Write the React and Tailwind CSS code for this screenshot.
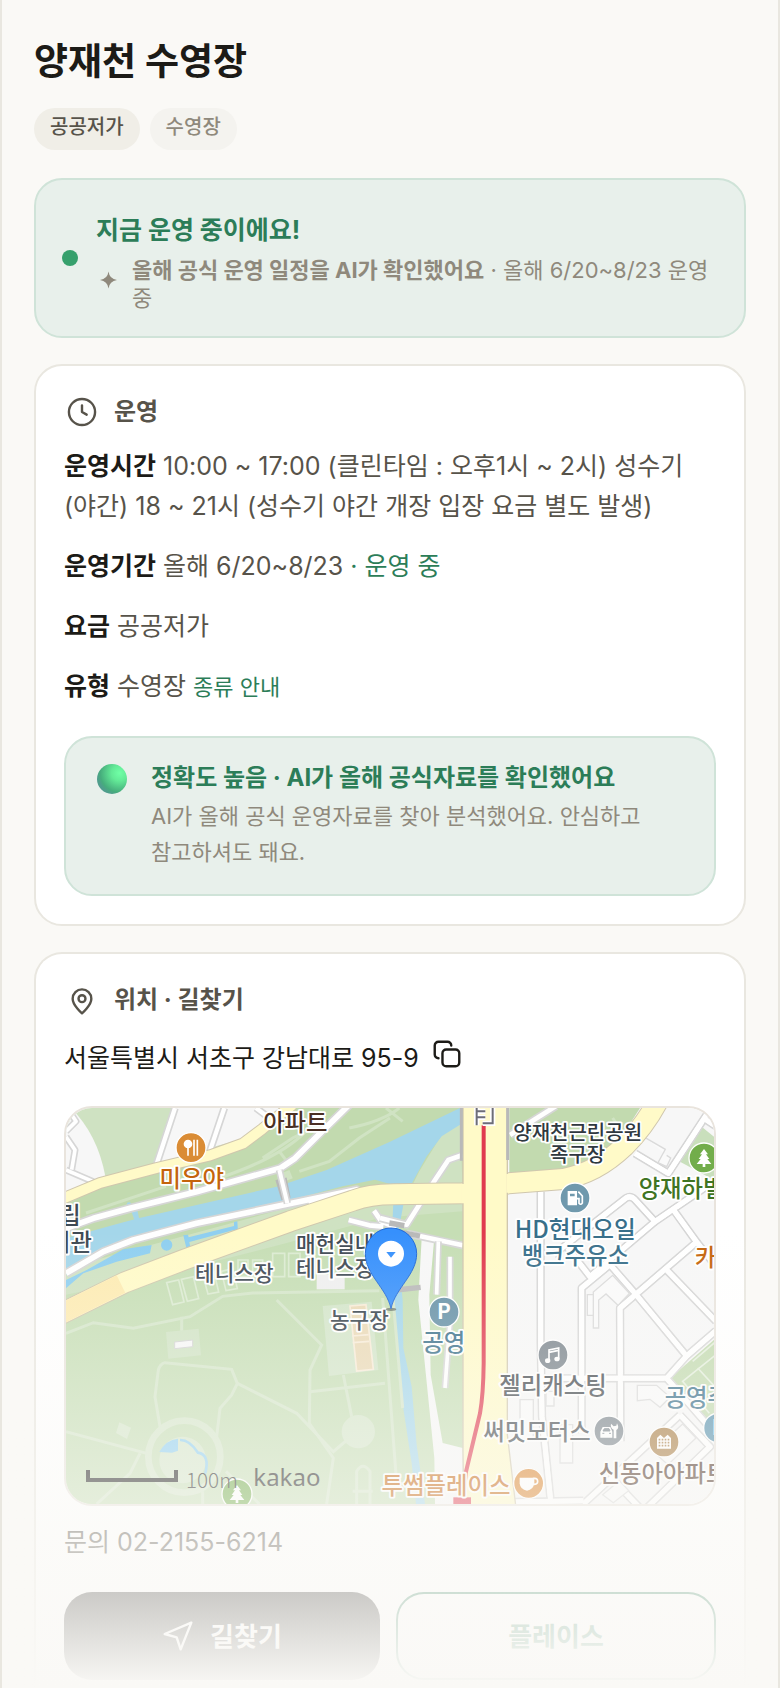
const KR = "font-['Inter','Noto_Sans_CJK_KR',sans-serif]";

function Icon({ children, className = 'size-8' }) {
  return (
    <svg viewBox="0 0 24 24" fill="none" stroke="currentColor" strokeWidth="1.8" strokeLinecap="round" strokeLinejoin="round" className={className} aria-hidden="true">
      {children}
    </svg>
  );
}

function Road({ d, w = 15, casing = '#d6d6d6', fill = '#ffffff', edge = 5 }) {
  return (
    <g fill="none" strokeLinejoin="round">
      <path d={d} stroke={casing} strokeWidth={w + edge * 2} />
      <path d={d} stroke={fill} strokeWidth={w} />
    </g>
  );
}

function Label({ x, y, size = 70, color, anchor = 'middle', children }) {
  return (
    <text x={x} y={y} fontSize={size} fill={color} textAnchor={anchor} fontWeight="500" stroke="#ffffff" strokeWidth="11" strokeLinejoin="round" paintOrder="stroke">
      {children}
    </text>
  );
}

function Poi({ x, y, color, children }) {
  return (
    <g transform={`translate(${x} ${y})`}>
      <circle r="45" fill={color} stroke="#ffffff" strokeWidth="4" />
      {children}
    </g>
  );
}

const TREE = 'M0-27l-12 16h6l-10 14h6l-12 15h18v9h8v-9h18l-12-15h6l-10-14h6z';

const CITY_ROADS = [
  'M1424 251V700L1428 926L1455 1188',
  'M1547 976V540L1632 470L1707 556',
  'M1707 136L1807 196L1922 20',
  'M1912 30L1950 55',
  'M1462 440L1680 270Q1694 262 1706 274L1767 341L1950 216',
  'M1505 420L1572 506L1767 341',
  'M1822 305L1892 402L1662 600L1664 1000',
  'M1892 402L1950 475',
  'M1802 486L1950 640',
  'M1707 556L1862 744L1802 811H1427',
  'M1862 744L1950 668',
  'M1802 811L1950 980',
  'M1842 921L1552 1188',
  'M1632 1106L1722 1200',
  'M1842 921L1932 1016L1742 1200',
  'M1347 1182L1552 1178',
];

const CITY_BLOCKS = [
  'M1362 875h40v120h-40z',
  'M1482 950h38v115h-38z',
  'M1564 560h26v62h-26z',
  'M1714 832h58l40 36-30 30-30-24-38 4z',
  'M1736 88l62 36-22 40 26 12 12-26-12-8',
  'M1582 660v-108l58-50 50 54-34 36-36-34-22 18v84z',
  'M1760 1030l90-82 40 42-84 80z',
  'M1610 1160l50-42 28 30-46 36z',
  'M1440 850h24v44h-24z',
];

const PARK_PATHS = [
  'M0 676L82 644L202 661L372 626L470 565L560 555L940 548',
  'M632 576L767 711L732 786L730 946L802 1050L782 1188',
  'M282 956L267 866L277 786Q282 768 297 764L497 784L514 826L497 861L462 901L452 986',
  'M514 826L692 916L802 1031L850 990',
  'M0 971L242 1036M222 1036L192 1096L92 1188',
  'M732 851L957 826M832 801L857 926',
  'M872 1188V1090Q890 1060 912 1090V1188M860 1150h60',
  'M347 626v60M480 1090L580 1188M410 1150v38',
  'M950 570L990 1100M980 560L1010 900',
];

function MapDrawing() {
  return (
    <svg viewBox="0 0 1944 1188" preserveAspectRatio="xMidYMid slice" role="img" aria-label="양재천 수영장 주변 지도" className="block size-full font-['Noto_Sans_CJK_KR',sans-serif]">
      <rect width="1944" height="1188" fill="#f7f7f7" />

      <path d="M0 0H1192V1188H0z" fill="#cfe2c2" />
      <path d="M0 0H15Q95 80 118 205L0 260z" fill="#f7f7f7" />
      <path d="M330 0H650L600 45L520 95L430 120L272 168z" fill="#f7f7f7" />
      <path d="M0 290L110 232L300 182L500 122L620 50L690 0H1190V260L980 250L820 290L0 480z" fill="#c2daaf" />
      <path d="M1182 20L1127 80L1060 190L1030 250L1190 250z" fill="#cfe2c2" />
      <path d="M0 480L700 290L940 230L980 240L960 300L600 420L0 640z" fill="#cfe2c2" />
      <path d="M0 560Q400 480 940 330L1190 310V1188H0z" fill="#c6deb5" />
      <path d="M1330 0H1722L1642 126L1492 186L1330 196z" fill="#c2daaf" />
      <path d="M1907 56L1944 86V216L1842 161z" fill="#c9dfbc" />
      <path d="M1950 690L1812 811L1912 936L1950 916z" fill="#c2daaf" />
      <path d="M1950 740L1850 820L1930 916M1895 780L1950 840M1880 760L1950 700" fill="none" stroke="#e4efdc" strokeWidth="5" />

      <g fill="none" stroke="#d0e3c3" strokeWidth="9">
        <path d="M60 315L300 235M460 210Q640 150 720 70L680 90L590 150M640 130L670 170" />
        <path d="M700 190L790 160L880 90L972 30M850 60Q950 40 1000 0M960 0L1010 40" />
        <path d="M660 190L670 215" strokeWidth="22" />
        <path d="M1560 190L1680 90L1640 30" />
      </g>

      <path d="M0 391L142 351L217 331L632 236L782 186L972 101L1182 0V50L1127 85L1082 145L1030 240L972 228L927 215L830 235L640 285L322 365L222 390L0 500z" fill="#a4d6ea" />
      <circle cx="189" cy="290" r="7" fill="#a4d6ea" />
      <path d="M196 310l12 34h14l-8-38z" fill="#a4d6ea" />
      <path d="M982 280H1014L992 400L1010 576L1012 720L1037 836L1052 1010L1077 1188H1050L1037 1066L1002 836L985 640L975 450z" fill="#a4d6ea" />
      <path d="M0 541L52 496L152 461L252 436L257 411L172 424L62 486L0 516z" fill="#8fcff0" />
      <circle cx="302" cy="411" r="17" fill="#8fcff0" />
      <path d="M352 382l14-2 2 8 136-34 0-12 10-2 2 32-10 2-2-8-134 36 3 16-12 2z" fill="#8fcff0" />

      <g fill="none" stroke="#d5e6ca" strokeWidth="9">
        {PARK_PATHS.map((d) => (
          <path key={d} d={d} />
        ))}
        <circle cx="355" cy="1046" r="108" strokeWidth="20" />
      </g>
      <circle cx="350" cy="1056" r="70" fill="#d5e6ca" />
      <path d="M150 975l10-32 35 16-12 34z" fill="#d5e6ca" />
      <circle cx="877" cy="971" r="50" fill="#d5e6ca" />
      <path d="M280 1032Q300 995 336 992V1028L318 1034z" fill="#8fcff0" />
      <path d="M342 996Q370 995 396 1034Q432 1040 418 1096" fill="none" stroke="#8fcff0" strokeWidth="8" />
      <path d="M300 672l98-10 7 80-98 10z" fill="#d0e3c4" />
      <path d="M326 702l54-6v20l-54 6z" fill="#f7f7f7" stroke="#d3d3d3" strokeWidth="3" />
      <path d="M770 594L917 581L937 786L789 804z" fill="#d3e5c9" />
      <path d="M852 594l48-4 22 194-50 5z" fill="#ead9b6" stroke="#f8ecd8" strokeWidth="5" />
      <path d="M858 684l50-4M860 704l50-4" stroke="#f8ecd8" strokeWidth="5" />
      <g fill="none" stroke="#dcebd2" strokeWidth="5">
        <path d="M302 524l36-8 16 66-34 8zM346 514l36-8 16 66-34 8zM410 500l34-8 14 60-32 6zM466 490l34-8 14 60-34 6zM620 436h36v70h-36zM668 436h34v70h-34zM516 456h30v50h-30zM560 456h30v50h-30z" />
      </g>
      <path d="M752 500h84v44h-84z" fill="#efefef" />

      <path d="M1067 390L1104 400L1090 560L1094 800L1130 1005L1190 1020V1188H1107L1105 1050L1057 576z" fill="#f7f7f7" />

      <Road d="M327 0L272 168M475 0L432 128M570 0L610 30" w={13} />
      <Road d="M0 86L27 126L17 185M0 186L82 221M10 10L30 40L0 70" w={11} />
      <Road d="M0 361L82 331L192 301L392 251L642 181L687 151L752 86L850 -10" w={17} />
      <Road d="M0 496L112 431L202 396L392 346L652 291L872 245L860 262L730 292" w={17} />
      <path d="M634 215L652 275M656 210L668 270" stroke="#b9b9b9" strokeWidth="12" />
      <Road d="M640 186L664 286" w={12} />
      <Road d="M848 336L910 352L952 356M924 308L946 340L990 360" w={14} />
      <Road d="M1190 141L1147 156L1107 216L1022 350L942 330M1190 412L1022 376" w={14} />
      <Road d="M1117 400L1112 560M1152 446V640L1137 840" w={11} />
      <path d="M970 345l45 8M1000 372l62 12M990 546l74-8" stroke="#b9b9b9" strokeWidth="16" />
      <Road d="M1332 81L1470 -6" w={14} />

      {CITY_ROADS.map((d) => (
        <Road key={d} d={d} />
      ))}
      <g fill="none" stroke="#ffffff" strokeWidth="15" strokeLinejoin="round">
        {CITY_ROADS.map((d) => (
          <path key={d} d={d} />
        ))}
      </g>
      <g fill="#fafafa" stroke="#dadada" strokeWidth="4">
        {CITY_BLOCKS.map((d) => (
          <path key={d} d={d} />
        ))}
      </g>

      <Road d="M-10 272L102 225L272 180L432 142L532 106L590 62L680 -10" w={30} casing="#d0c7ae" fill="#fffac8" edge={3} />
      <Road d="M-20 620L177 523L352 456L672 340L860 278Q910 259 982 259L1192 256L1327 226L1492 213Q1590 196 1675 115Q1740 50 1780 -30" w={60} casing="#d0c7ae" fill="#fffac8" edge={3} />
      <path d="M-20 620L165 528" stroke="#fdebb2" strokeWidth="58" />
      <path d="M1191 -10V1030L1194 1200H1350L1324 980V-10z" fill="#fffac8" stroke="#d0c7ae" strokeWidth="4" />
      <path d="M1191 228V286M1325 198V254" stroke="#fffac8" strokeWidth="8" />
      <path d="M1186 0V158M1325 0V156" stroke="#b9b9b9" strokeWidth="9" />
      <path d="M1253 52V766Q1252 860 1242 916L1200 1091L1190 1188" fill="none" stroke="#e03a4e" strokeWidth="12" />
      <path d="M1162 1168h53v20h-53z" fill="#e03a4e" />
      <g fill="none">
        <path d="M1232 0V52M1232 10h26M1232 28h26M1280 0V46H1250" stroke="#ffffff" strokeWidth="16" />
        <path d="M1232 0V52M1232 10h26M1232 28h26M1280 0V46H1250" stroke="#6d6d78" strokeWidth="6" />
      </g>

      <Label x={688} y={68} color="#4a2f22">아파트</Label>
      <Label x={377} y={236} color="#c4640c">미우야</Label>
      <Label x={44} y={349} color="#3f4a54" anchor="end">구립</Label>
      <Label x={78} y={430} color="#3f4a54" anchor="end">서관</Label>
      <Label x={505} y={518} size={64} color="#3f4a54">테니스장</Label>
      <Label x={690} y={432} size={64} color="#3f4a54" anchor="start">매헌실내</Label>
      <Label x={690} y={504} size={64} color="#3f4a54" anchor="start">테니스장</Label>
      <Label x={880} y={660} size={64} color="#34404a">농구장</Label>
      <Label x={1535} y={96} size={60} color="#2f3840">양재천근린공원</Label>
      <Label x={1535} y={162} size={60} color="#2f3840">족구장</Label>
      <Label x={1528} y={390} size={71} color="#386f8a">HD현대오일</Label>
      <Label x={1528} y={467} color="#386f8a">뱅크주유소</Label>
      <Label x={1718} y={266} color="#3f7423" anchor="start">양재하벌</Label>
      <Label x={1886} y={473} color="#c4640c" anchor="start">카페</Label>
      <Label x={1133} y={728} color="#386f8a">공영</Label>
      <Label x={1461} y={857} color="#43494e">젤리캐스팅</Label>
      <Label x={1413} y={996} color="#43494e">써밋모터스</Label>
      <Label x={1796} y={894} color="#386f8a" anchor="start">공영주차장</Label>
      <Label x={1598} y={1121} color="#4a2f22" anchor="start">신동아아파트</Label>
      <Label x={1140} y={1157} color="#c4640c">투썸플레이스</Label>

      <Poi x={375} y={119} color="#da8c35">
        <circle cx="-9" cy="-11" r="13" fill="#ffffff" />
        <path d="M-9-8V24M9-24V24M19-24V24" stroke="#ffffff" strokeWidth="5" />
      </Poi>
      <Poi x={1527} y={270} color="#7099ad">
        <path d="M-22-21H6V22H-22z" fill="#ffffff" />
        <path d="M-15-13H-1V-5H-15z" fill="#7099ad" />
        <path d="M6 2H12V16Q17 22 22 15V-6L10-19" fill="none" stroke="#ffffff" strokeWidth="5" />
      </Poi>
      <Poi x={1914} y={150} color="#72ad4b">
        <path d={TREE} fill="#ffffff" />
      </Poi>
      <Poi x={1134} y={612} color="#6590a6">
        <text y="22" fontSize="62" fontWeight="700" textAnchor="middle" fill="#ffffff">P</text>
      </Poi>
      <Poi x={1461} y={741} color="#7a848c">
        <path d="M-12 17V-15L17-21V11M-12-8L17-14" fill="none" stroke="#ffffff" strokeWidth="5" />
        <ellipse cx="-16" cy="17" rx="8" ry="7" fill="#ffffff" />
        <ellipse cx="12" cy="12" rx="8" ry="7" fill="#ffffff" />
      </Poi>
      <Poi x={1629} y={969} color="#7a848c">
        <path d="M-26 20V2L-19-12H4L10 2V20zM14 22V-4Q3-10 6-22L14-14L22-16L24-23Q32-8 22-3V22z" fill="#ffffff" />
        <path d="M-18 0L-14-7H0L3 0zM-20 7h6M0 7h6" fill="#7a848c" stroke="#7a848c" strokeWidth="3" />
      </Poi>
      <Poi x={1794} y={1002} color="#a87c42">
        <path d="M-21 20V-12L-11-22L0-12L11-22L21-12V20z" fill="#ffffff" />
        <path d="M-16-7H16M-16 2H16M-16 11H16" stroke="#a87c42" strokeWidth="5" strokeDasharray="5 4" />
      </Poi>
      <Poi x={1388} y={1126} color="#da8025">
        <path d="M-27-17H17V0Q14 20-5 22Q-25 20-27 0z" fill="#ffffff" />
        <circle cx="18" cy="-6" r="9" fill="none" stroke="#ffffff" strokeWidth="5" />
      </Poi>
      <Poi x={1958} y={960} color="#5590ad">
        <text y="22" fontSize="62" fontWeight="700" textAnchor="middle" fill="#ffffff">P</text>
      </Poi>
      <Poi x={513} y={1158} color="#72ad4b">
        <path d={TREE} fill="#ffffff" />
      </Poi>

      <path d="M66 1086V1116H330V1086" fill="none" stroke="#1c1c1c" strokeWidth="12" />
      <text x="360" y="1141" fontSize="62" fontWeight="300" fill="#222222">100m</text>
      <text x="562" y="1133" fontSize="72" fill="#222222" className="font-['Noto_Sans',sans-serif]">kakao</text>

      <ellipse cx="975" cy="604" rx="16" ry="5" fill="#55605a" opacity="0.7" />
      <path d="M975 602C962 540 898 500 898 437A77 77 0 0 1 1052 437C1052 500 988 540 975 602z" fill="#3690fc" stroke="#1f68d8" strokeWidth="3" />
      <circle cx="975" cy="437" r="39" fill="#ffffff" />
      <path d="M961 432H989L975 449z" fill="#3690fc" />
    </svg>
  );
}

function Fact({ label, children }) {
  return (
    <p className="text-[25px] leading-10 text-[#57534a]">
      <strong className="font-bold text-[#1c1b17]">{label}</strong> {children}
    </p>
  );
}

export default function App() {
  return (
    <div className={`${KR} relative flex min-h-screen flex-col break-keep border-x-2 border-[#e9e7e0] bg-[#faf9f6] px-8 text-[#1c1b17]`}>
      <header className="pt-9">
        <h1 className="text-[37px] leading-[52px] font-bold">양재천 수영장</h1>
        <ul className="mt-5 flex gap-2.5 text-xl font-medium">
          <li className="flex h-[42px] items-start rounded-full bg-[#f0eee7] px-4 pt-[5px] text-[#57534a]">공공저가</li>
          <li className="flex h-[42px] items-start rounded-full bg-[#f4f3ef] px-4 pt-[5px] text-[#8f897c]">수영장</li>
        </ul>
      </header>

      <section className="mt-7 flex min-h-40 items-center gap-[18px] rounded-[28px] border-2 border-[#cfe3d8] bg-[#e8f0eb] px-[26px]">
        <span className="size-4 shrink-0 rounded-full bg-[#36a06c]" />
        <div className="pt-2">
          <h2 className="text-[25px] leading-9 font-bold text-[#2c7d58]">지금 운영 중이에요!</h2>
          <div className="mt-2 flex items-start gap-3 text-[#8f897c]">
            <svg viewBox="0 0 24 24" className="mt-3 size-6 shrink-0" fill="currentColor" aria-hidden="true">
              <path d="M12.500 3.500Q13.500 11 21 12Q13.500 13 12.500 20.500Q11.500 13 4 12Q11.500 11 12.500 3.500z" />
            </svg>
            <p className="text-[22px] leading-7">
              <strong className="font-bold">올해 공식 운영 일정을 AI가 확인했어요</strong> · 올해 6/20~8/23 운영 중
            </p>
          </div>
        </div>
      </section>

      <section className="mt-[26px] rounded-[28px] border-2 border-[#e9e7e0] bg-white p-7">
        <h2 className="flex items-center gap-4 pl-0.5 text-2xl leading-9 font-bold text-[#57534a]">
          <Icon>
            <circle cx="12" cy="12" r="9.8" />
            <path d="M12 7v5l3.5 2" />
          </Icon>
          운영
        </h2>
        <div className="mt-4 flex flex-col gap-5">
          <Fact label="운영시간">10:00 ~ 17:00 (클린타임 : 오후1시 ~ 2시) 성수기 (야간) 18 ~ 21시 (성수기 야간 개장 입장 요금 별도 발생)</Fact>
          <Fact label="운영기간">
            올해 6/20~8/23 <span className="text-[#2c7d58]">· 운영 중</span>
          </Fact>
          <Fact label="요금">공공저가</Fact>
          <Fact label="유형">
            수영장 <a href="#types" className="text-[22px] leading-none text-[#2c7d58]">종류 안내</a>
          </Fact>
        </div>
        <div className="mt-[30px] flex gap-6 rounded-[28px] border-2 border-[#cfe3d8] bg-[#e8f0eb] px-[31px] pt-[22px] pb-6">
          <svg viewBox="0 0 30 30" className="mt-1 size-[30px] shrink-0" aria-hidden="true">
            <defs>
              <radialGradient id="ball" cx="0.75" cy="0.3" r="0.75">
                <stop offset="0" stopColor="#70ffa6" />
                <stop offset="0.35" stopColor="#63ea97" />
                <stop offset="0.85" stopColor="#46ad7c" />
                <stop offset="1" stopColor="#4f9d8c" />
              </radialGradient>
            </defs>
            <circle cx="15" cy="15" r="15" fill="url(#ball)" />
          </svg>
          <div>
            <h3 className="text-2xl leading-9 font-bold text-[#2c7d58]">정확도 높음 · AI가 올해 공식자료를 확인했어요</h3>
            <p className="mt-0.5 text-[22px] leading-9 text-[#8f897c]">AI가 올해 공식 운영자료를 찾아 분석했어요. 안심하고 참고하셔도 돼요.</p>
          </div>
        </div>
      </section>

      <section className="mt-[26px] flex-1 rounded-t-[28px] border-2 border-b-0 border-[#e9e7e0] bg-white px-7 pt-7 pb-2">
        <h2 className="flex items-center gap-4 pl-0.5 text-2xl leading-9 font-bold text-[#57534a]">
          <Icon>
            <path d="M12 22s7-6 7-11a7 7 0 0 0-14 0c0 5 7 11 7 11z" />
            <circle cx="12" cy="11" r="2.6" />
          </Icon>
          위치 · 길찾기
        </h2>
        <div className="mt-5 flex items-start gap-3">
          <p className="text-[25px] leading-10">서울특별시 서초구 강남대로 95-9</p>
          <button type="button" aria-label="주소 복사" className="size-8">
            <Icon>
              <rect x="8.6" y="8.6" width="12.6" height="12.6" rx="2.8" />
              <path d="M15.2 5.600a2.800 2.800 0 0 0-2.800-2.800H5.600a2.800 2.800 0 0 0-2.800 2.800v6.800a2.800 2.800 0 0 0 2.800 2.800" />
            </Icon>
          </button>
        </div>
        <div className="mt-7 h-[400px] overflow-hidden rounded-[28px] border-2 border-[#e9e4dd]">
          <MapDrawing />
        </div>
        <p className="mt-4 text-[25px] leading-10 text-[#57534a]">문의 02-2155-6214</p>
        <div className="mt-[30px] flex gap-4 text-[26px] font-bold">
          <a href="#directions" className="flex h-[88px] flex-1 items-center justify-center gap-4 rounded-[28px] bg-[#1c1b17] text-white">
            <Icon>
              <path d="M22 2L2 10.500l9 2.500 3 9z" />
            </Icon>
            길찾기
          </a>
          <a href="#place" className="flex h-[88px] flex-1 items-center justify-center rounded-[28px] border-2 border-[#2c7d58] text-[#2c7d58]">플레이스</a>
        </div>
      </section>

      <div className="pointer-events-none absolute inset-x-0 bottom-0 h-[456px] bg-linear-to-b from-[#faf9f6]/0 to-[#faf9f6]" />
    </div>
  );
}
